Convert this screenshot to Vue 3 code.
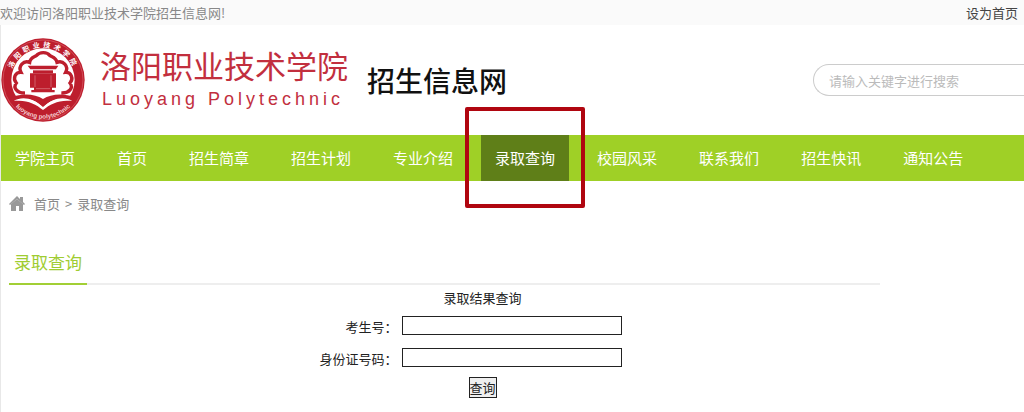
<script setup>
import { ref } from 'vue'

const keyword = ref('')
const examNumber = ref('')
const idNumber = ref('')

const activeItem = '录取查询'

const navItems = [
  '学院主页',
  '首页',
  '招生简章',
  '招生计划',
  '专业介绍',
  '录取查询',
  '校园风采',
  '联系我们',
  '招生快讯',
  '通知公告',
]
</script>

<template>
  <div class="page">
    <div class="top-bar">
      <span>欢迎访问洛阳职业技术学院招生信息网!</span>
      <a href="#" class="set-home">设为首页</a>
    </div>

    <div class="page-body">
      <header class="site-header">
        <svg class="seal" viewBox="0 0 252 252" aria-hidden="true">
          <defs>
            <path id="seal-top" d="M31 150A98 98 0 1 1 221 150" />
            <path id="seal-bottom" d="M20 168A113 113 0 0 0 232 168" />
          </defs>
          <circle cx="126" cy="126" r="125" fill="#bd1e2d" />
          <circle cx="126" cy="126" r="120" fill="none" stroke="#d8606b" stroke-width="2" />
          <circle cx="126" cy="126" r="95" fill="#fff" />
          <!-- tree crown -->
          <path
            d="M72 165C48 166 35 149 46 135C34 121 43 102 60 103C50 84 68 66 86 73C88 58 100 57 106 53C116 41 138 41 147 53C153 57 165 58 168 73C186 66 204 84 194 103C210 102 219 121 207 135C218 149 205 166 181 165"
            fill="none"
            stroke="#bd1e2d"
            stroke-width="10"
          />
          <!-- gate -->
          <path d="M80 83H172L165 94H88Z" fill="#bd1e2d" />
          <rect x="96" y="97" width="60" height="9" fill="#bd1e2d" />
          <path d="M87 106H165V149H153V156H161V163H91V156H99V149H87Z" fill="#bd1e2d" />
          <path d="M102 112V147M150 112V147M105 152H147" stroke="#dc8088" stroke-width="2" />
          <!-- open book -->
          <path
            d="M30 177C66 165 102 167 126 183C150 167 186 165 222 177L214 191C188 177 154 180 126 207C98 180 64 177 38 191Z"
            fill="#bd1e2d"
          />
          <path
            d="M38 188C64 174 98 179 126 209C154 179 188 174 214 188C190 187 165 198 148 219H104C87 198 62 187 38 188Z"
            fill="#fff"
          />
          <path d="M38 189C76 184 103 197 126 216C149 197 176 184 214 189L196 216Q126 249 56 216Z" fill="#bd1e2d" />
          <text class="seal-name">
            <textPath href="#seal-top" startOffset="50%" text-anchor="middle">洛阳职业技术学院</textPath>
          </text>
          <text class="seal-latin">
            <textPath href="#seal-bottom" startOffset="50%" text-anchor="middle">luoyang polytechnic</textPath>
          </text>
        </svg>

        <div class="school">
          <div class="school-name">洛阳职业技术学院</div>
          <div class="school-latin">Luoyang Polytechnic</div>
        </div>
        <h1 class="site-title">招生信息网</h1>

        <form class="search" @submit.prevent>
          <input
            v-model="keyword"
            type="text"
            placeholder="请输入关键字进行搜索"
            aria-label="请输入关键字进行搜索"
          />
        </form>
      </header>

      <nav class="nav">
        <a
          v-for="item in navItems"
          :key="item"
          href="#"
          class="nav-item"
          :class="{ active: item === activeItem }"
        >
          {{ item }}
        </a>
      </nav>

      <div class="breadcrumb">
        <svg class="home-icon" viewBox="0 0 16 16" aria-hidden="true">
          <path d="M0 8L8 0L11 3V1H14V6L16 8L15 9L8 3L1 9Z" />
          <path d="M2 8L8 3L14 8V15H10V10H7V15H2Z" />
        </svg>
        <a href="#">首页</a>
        <span>&gt;</span>
        <a href="#">录取查询</a>
      </div>

      <main class="content">
        <div class="section-head">
          <h2>录取查询</h2>
        </div>

        <form class="query-form" @submit.prevent>
          <h3>录取结果查询</h3>
          <label for="exam-number">考生号：</label>
          <input id="exam-number" v-model="examNumber" type="text" />
          <label for="id-number">身份证号码：</label>
          <input id="id-number" v-model="idNumber" type="text" />
          <button type="submit">查询</button>
        </form>
      </main>
    </div>
  </div>
</template>

<style>
body {
  background: #fff;
}
</style>

<style scoped>
.page {
  display: flex;
  flex-direction: column;
  min-height: 100vh;
  overflow: hidden;
  font-family: 'Noto Sans CJK SC', sans-serif;
  font-size: 13px;
  color: #222;
}

.page * {
  box-sizing: border-box;
}

a {
  color: inherit;
  text-decoration: none;
}

h1,
h2,
h3 {
  margin: 0;
  font-weight: 400;
}

.top-bar {
  display: flex;
  justify-content: space-between;
  padding-right: 6px;
  line-height: 25px;
  background: #fafafa;
  color: #888;
}

.set-home {
  color: #444;
}

.page-body {
  flex: 1;
  border-left: 1px solid #e8e8e8;
}

.site-header {
  display: flex;
  align-items: center;
  height: 110px;
}

.seal {
  flex: none;
  width: 84px;
  height: 84px;
}

.seal-name {
  font-size: 21px;
  font-weight: 700;
  letter-spacing: 9px;
  fill: #fff;
}

.seal-latin {
  font-family: 'Liberation Sans', sans-serif;
  font-size: 19px;
  font-weight: 700;
  fill: #f5cdd0;
}

.school {
  padding-top: 4px;
  margin-left: 15px;
  color: #c22f3e;
  white-space: nowrap;
}

.school-name {
  font-size: 31px;
  line-height: 34px;
}

.school-latin {
  padding-left: 2px;
  font-family: 'Liberation Sans', sans-serif;
  font-size: 18px;
  line-height: 34px;
  letter-spacing: 4px;
}

.site-title {
  margin-left: 19px;
  font-size: 28px;
  font-weight: 500;
  line-height: 40px;
  color: #111;
  white-space: nowrap;
}

.search {
  width: 211px;
  margin-left: auto;
}

.search input {
  display: block;
  width: 100%;
  height: 32px;
  padding: 0 15px;
  border: 1px solid #ccc;
  border-right: 0;
  border-radius: 16px 0 0 16px;
  background: #fff;
  font: inherit;
  outline: none;
}

.search input::placeholder {
  color: #bbb;
}

.nav {
  display: flex;
  gap: 14px;
  background: #9fd026;
}

.nav-item {
  padding: 0 14px;
  font-size: 15px;
  line-height: 46px;
  color: #fff;
  white-space: nowrap;
}

.nav-item.active {
  position: relative;
  background: #5f7f18;
}

/* red frame around the current item */
.nav-item.active::after {
  content: '';
  position: absolute;
  inset: -28px -16px -27px;
  border: 4px solid #b00610;
  border-radius: 2px;
}

.breadcrumb {
  display: flex;
  align-items: center;
  gap: 5px;
  padding: 12px 8px;
  line-height: 22px;
  color: #888;
}

.home-icon {
  width: 16px;
  height: 16px;
  margin-right: 4px;
  fill: #999;
}

.content {
  max-width: 871px;
  margin: 14px 8px 0;
}

.section-head {
  display: flex;
  border-bottom: 2px solid #eee;
}

.section-head h2 {
  margin-bottom: -2px;
  padding: 0 5px;
  border-bottom: 2px solid #a2cf35;
  font-size: 17px;
  line-height: 42px;
  color: #9fcc32;
}

.query-form {
  display: grid;
  grid-template-columns: 78px 220px;
  column-gap: 4px;
  align-items: start;
  width: 402px;
  margin: 0 auto;
  padding: 0 24px 0 76px;
}

/* the heading and the button are centred on the form with its right margin */
.query-form h3,
.query-form button {
  grid-column: 1 / -1;
  justify-self: center;
  margin-right: -24px;
}

.query-form h3 {
  font-size: 13px;
  line-height: 26px;
}

.query-form label {
  line-height: 32px;
  text-align: right;
}

.query-form input {
  height: 19px;
  margin-top: 5px;
  padding: 0 4px;
  border: 1px solid #222;
  border-radius: 0;
  background: #fff;
  font: inherit;
}

.query-form button {
  width: 28px;
  height: 21px;
  margin-top: 2px;
  padding: 0;
  border: 1px solid #222;
  border-radius: 0;
  background: #efefef;
  font: inherit;
  line-height: 19px;
  color: #222;
}
</style>
